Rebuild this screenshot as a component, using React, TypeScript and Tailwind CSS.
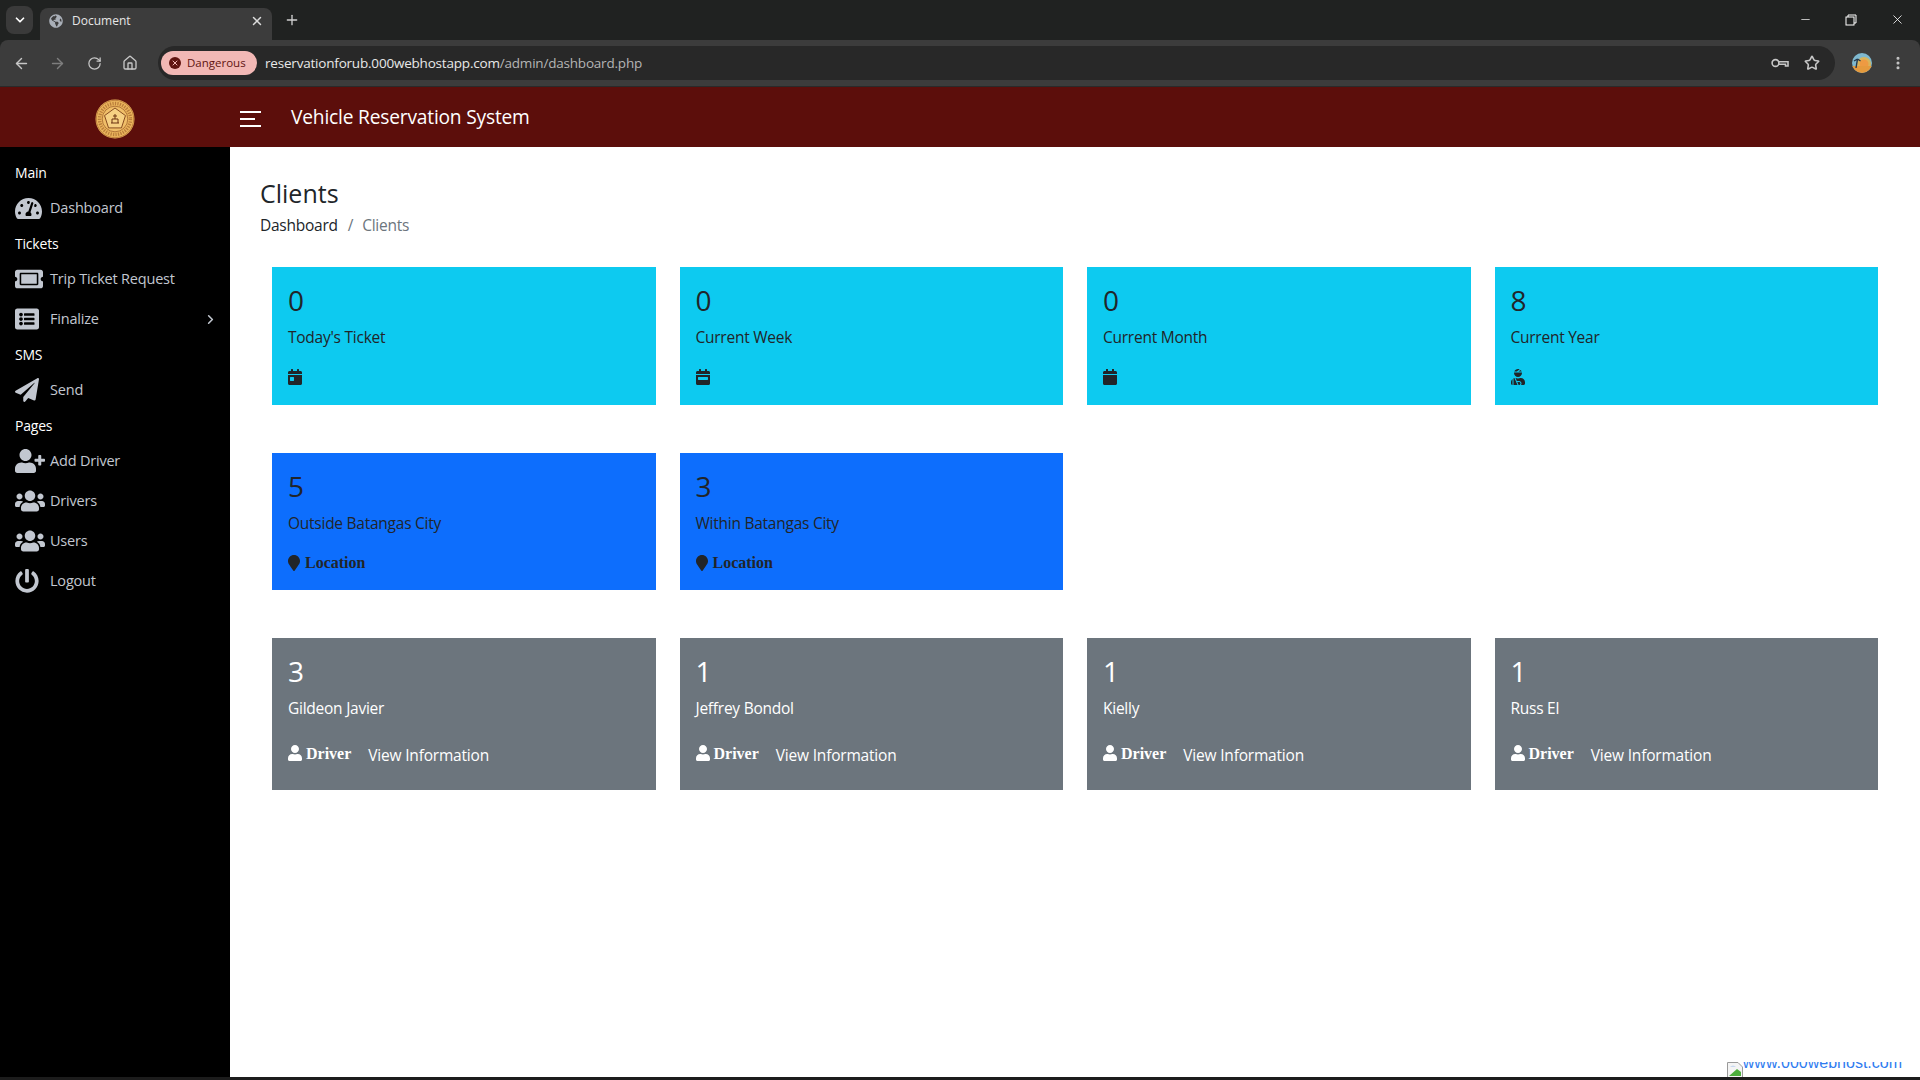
import React from 'react';
import { ArrowLeft, ArrowRight, ChevronDown, ChevronRight, EllipsisVertical, Home, Minus, Plus, RotateCw, Star, X } from 'lucide-react';
import {
  FaCalendar,
  FaCalendarDay,
  FaCalendarWeek,
  FaGlobeAmericas,
  FaListAlt,
  FaMapMarker,
  FaPaperPlane,
  FaPowerOff,
  FaTachometerAlt,
  FaTicketAlt,
  FaUser,
  FaUserInjured,
  FaUserPlus,
  FaUsers,
} from 'react-icons/fa';

const UI_FONT = { fontFamily: '"Open Sans", "Noto Sans", sans-serif' };

function Seal() {
  const points = [0, 72, 144, 216, 288].map((deg) => {
    const a = ((deg - 90) * Math.PI) / 180;
    return `${20 + 11 * Math.cos(a)},${20 + 11 * Math.sin(a)}`;
  });
  return (
    <svg width="40" height="40" viewBox="0 0 40 40">
      <circle cx="20" cy="20" r="19.5" fill="#eab45c" />
      <circle cx="20" cy="20" r="18.7" fill="none" stroke="#a2602a" strokeWidth="0.6" />
      <circle cx="20" cy="20" r="15.5" fill="none" stroke="#8f4f1f" strokeWidth="3.4" strokeDasharray="1.2 1.3" opacity="0.55" />
      <circle cx="20" cy="20" r="12.8" fill="#f0be68" stroke="#8a4a1e" strokeWidth="0.6" />
      <polygon points={points.join(' ')} fill="#f6d083" stroke="#7a3d16" strokeWidth="0.9" />
      <path d="M16 24h8M17 24v-4h6v4M20 20v-5M18 17h4" stroke="#6b3212" strokeWidth="1" fill="none" />
    </svg>
  );
}

function Avatar() {
  return (
    <svg width="20" height="20" viewBox="0 0 20 20">
      <defs>
        <clipPath id="avatar-clip">
          <circle cx="10" cy="10" r="10" />
        </clipPath>
      </defs>
      <g clipPath="url(#avatar-clip)">
        <rect width="20" height="20" fill="#7fb9cf" />
        <circle cx="12" cy="11" r="7" fill="#d9b45a" />
        <circle cx="12" cy="11" r="4.5" fill="#ee9a42" />
        <rect y="13" width="20" height="7" fill="#e59a3d" />
        <path d="M4 15 L5.5 6 M5.5 6 L2 8 M5.5 6 L8.5 8" stroke="#26384a" strokeWidth="1.4" fill="none" />
      </g>
    </svg>
  );
}

function BrowserChrome() {
  return (
    <div className="shrink-0 bg-[#202221] text-[#c7c7c7]">
      <div className="flex h-10 items-end pl-[6px]">
        <div className="mb-[6px] flex h-[28px] w-[27px] items-center justify-center rounded-lg bg-[#3a3a3a]">
          <ChevronDown size={14} strokeWidth={3} className="text-white" />
        </div>
        <div className="ml-[7px] flex h-[32px] w-[232px] items-center rounded-t-lg bg-[#3c3c3c] pb-[6px] pl-[9px] pr-[8px]">
          <FaGlobeAmericas size={14} className="text-[#a9afb8]" />
          <span className="ml-[9px] flex-1 text-[12px] text-[#e6e6e6]" style={UI_FONT}>Document</span>
          <X size={14} strokeWidth={2.5} className="text-[#dcdcdc]" />
        </div>
        <div className="mb-[12px] ml-[10px] flex w-5 items-center justify-center">
          <Plus size={16} strokeWidth={2} className="text-[#d0d0d0]" />
        </div>
        <div className="mb-[13px] ml-auto flex items-center gap-[33px] pr-[15px] text-white">
          <Minus size={13} strokeWidth={1.3} />
          <svg width="12" height="12" viewBox="0 0 12 12" fill="none" stroke="currentColor" strokeWidth="1">
            <rect x="1" y="3" width="8" height="8" />
            <path d="M3 3V1h8v8H9" />
          </svg>
          <X size={15} strokeWidth={1.3} />
        </div>
      </div>
      <div className="flex h-[47px] items-center rounded-t-lg border-b border-b-[#2a2a2a] bg-[#3c3c3c] pl-[13px]">
        <ArrowLeft size={17} className="text-[#c7c7c7]" />
        <ArrowRight size={17} className="ml-[19px] text-[#7e7e7e]" />
        <RotateCw size={15} className="ml-[21px] text-[#c7c7c7]" />
        <Home size={16} className="ml-[20px] text-[#c7c7c7]" />
        <div className="ml-[20px] flex h-[34px] w-[1677px] items-center rounded-full bg-[#282828] pl-[3px] pr-[15px]">
          <div className="flex h-[24px] w-[96px] items-center rounded-full bg-[#f2b8b5] pl-[8px]">
            <span className="flex h-[12px] w-[12px] items-center justify-center rounded-full bg-[#601410]">
              <X size={8} strokeWidth={3} className="text-[#f2b8b5]" />
            </span>
            <span className="ml-[6px] text-[11.5px] text-[#601410]" style={UI_FONT}>Dangerous</span>
          </div>
          <span className="ml-[8px] text-[13.5px] tracking-[-0.2px] text-[#e8e8e8]" style={UI_FONT}>
            reservationforub.000webhostapp.com<span className="text-[#b5b5b5]">/admin/dashboard.php</span>
          </span>
          <svg width="18" height="11" viewBox="0 0 18 11" fill="none" stroke="#c7c7c7" strokeWidth="1.6" className="ml-auto">
            <circle cx="4.5" cy="5" r="3.4" />
            <path d="M8 3.8H17V8H14.5V6.2H8" />
          </svg>
          <Star size={16} strokeWidth={2.4} className="ml-[15px] text-[#c7c7c7]" />
        </div>
        <div className="ml-[17px]"><Avatar /></div>
        <EllipsisVertical size={16} strokeWidth={2.6} className="ml-[18px] text-[#c7c7c7]" />
      </div>
    </div>
  );
}

function Header() {
  return (
    <header className="flex h-[60px] shrink-0 items-center bg-[#5c0e0b] text-white">
      <div className="flex w-[230px] shrink-0 justify-center pt-[3px]"><Seal /></div>
      <div className="ml-[10px] flex w-[21px] flex-col gap-[5px] pt-[3px]">
        <span className="h-[2px] w-[21px] bg-white" />
        <span className="h-[2px] w-[15px] bg-white" />
        <span className="h-[2px] w-[21px] bg-white" />
      </div>
      <span className="ml-[30px] text-[19.2px] tracking-[-0.2px]" style={UI_FONT}>Vehicle Reservation System</span>
    </header>
  );
}

const NAV = [
  { kind: 'head', label: 'Main', cls: 'mt-[14px] mb-[3px]' },
  { kind: 'item', label: 'Dashboard', icon: FaTachometerAlt, size: 27 },
  { kind: 'head', label: 'Tickets', cls: 'mt-[4px] mb-[3px]' },
  { kind: 'item', label: 'Trip Ticket Request', icon: FaTicketAlt, size: 28 },
  { kind: 'item', label: 'Finalize', icon: FaListAlt, size: 24, arrow: true },
  { kind: 'head', label: 'SMS', cls: 'mt-[4px] mb-[3px]' },
  { kind: 'item', label: 'Send', icon: FaPaperPlane, size: 24 },
  { kind: 'head', label: 'Pages', cls: 'mt-[4px] mb-[3px]' },
  { kind: 'item', label: 'Add Driver', icon: FaUserPlus, size: 30 },
  { kind: 'item', label: 'Drivers', icon: FaUsers, size: 30 },
  { kind: 'item', label: 'Users', icon: FaUsers, size: 30 },
  { kind: 'item', label: 'Logout', icon: FaPowerOff, size: 24 },
] as const;

function Sidebar() {
  return (
    <aside className="w-[230px] shrink-0 bg-black">
      {NAV.map((n) => {
        if (n.kind === 'head') {
          return (
            <div key={n.label} className={`h-6 pl-[15px] text-[14px] leading-6 tracking-[-0.2px] text-white ${n.cls}`}>{n.label}</div>
          );
        }
        const Icon = n.icon;
        return (
          <div key={n.label} className="relative flex h-10 items-center text-[#c2c7d0]">
            <div className="flex w-[50px] shrink-0 justify-start pl-[15px]">
              <Icon size={n.size} />
            </div>
            <span className="text-[14.5px] tracking-[-0.2px]">{n.label}</span>
            {'arrow' in n && <ChevronRight size={15} strokeWidth={2.5} className="absolute right-[12px]" />}
          </div>
        );
      })}
    </aside>
  );
}

function Card({ count, label, tone, children, height }: { count: string; label: string; tone: string; children: React.ReactNode; height: string }) {
  return (
    <div className={`p-4 ${tone} ${height}`}>
      <div className="text-[28px] font-medium leading-[34px]">{count}</div>
      <div className="mt-[8px] text-[15.5px] leading-6 tracking-[-0.25px]">{label}</div>
      {children}
    </div>
  );
}

const CYAN = 'bg-[#0dcaf0] text-[#212529]';
const BLUE = 'bg-[#0d6efd] text-[#212529]';
const GRAY = 'bg-[#6c757d] text-white';
const SERIF = { fontFamily: '"Liberation Serif", serif' };

const TOP = [
  { count: '0', label: "Today's Ticket", Icon: FaCalendarDay },
  { count: '0', label: 'Current Week', Icon: FaCalendarWeek },
  { count: '0', label: 'Current Month', Icon: FaCalendar },
  { count: '8', label: 'Current Year', Icon: FaUserInjured },
];

const DRIVERS = [
  { count: '3', label: 'Gildeon Javier' },
  { count: '1', label: 'Jeffrey Bondol' },
  { count: '1', label: 'Kielly' },
  { count: '1', label: 'Russ El' },
];

function Main() {
  return (
    <main className="flex-1 bg-white pl-[30px] pr-[42px] pt-[30px]">
      <h1 className="text-[25px] font-medium leading-[32px] text-[#212529]">Clients</h1>
      <div className="mt-[4px] text-[15.5px] leading-6 tracking-[-0.25px]">
        <span className="text-[#212529]">Dashboard</span>
        <span className="ml-[10px] mr-[9px] text-[#6c757d]">/</span>
        <span className="text-[#6c757d]">Clients</span>
      </div>
      <div className="ml-3 mt-[30px] flex flex-col gap-12">
        <div className="grid grid-cols-4 gap-x-6">
          {TOP.map((c) => (
            <Card key={c.label} count={c.count} label={c.label} tone={CYAN} height="h-[138px]">
              <div className="-ml-[1px] mt-[20px] h-4"><c.Icon size={16} /></div>
            </Card>
          ))}
        </div>
        <div className="grid grid-cols-4 gap-x-6">
          {['Outside Batangas City|5', 'Within Batangas City|3'].map((v) => {
            const [label, count] = v.split('|');
            return (
              <Card key={label} count={count} label={label} tone={BLUE} height="h-[137px]">
                <div className="mt-[20px] flex h-4 items-center">
                  <FaMapMarker size={16} className="-ml-[2px]" />
                  <span className="ml-[3px] text-[16px] font-bold" style={SERIF}>Location</span>
                </div>
              </Card>
            );
          })}
        </div>
        <div className="grid grid-cols-4 gap-x-6">
          {DRIVERS.map((d) => (
            <Card key={d.label} count={d.count} label={d.label} tone={GRAY} height="h-[152px]">
              <div className="mt-[26px] flex h-4 items-center">
                <FaUser size={16} className="-ml-[1px] -mt-[2px]" />
                <span className="ml-[3px] -mt-[1px] text-[16px] font-bold" style={SERIF}>Driver</span>
                <span className="ml-[17px] mt-[3px] text-[15.5px] tracking-[-0.2px]">View Information</span>
              </div>
            </Card>
          ))}
        </div>
      </div>
    </main>
  );
}

function BrokenBanner() {
  return (
    <div className="absolute bottom-[2px] right-[18px] flex items-end">
      <svg width="16" height="16" viewBox="0 0 16 16">
        <path d="M0.5 0.5H11L15.5 5V15.5H0.5Z" fill="#f4f4f4" stroke="#9a9a9a" />
        <path d="M2 14 L10 7 L14 10 V14 Z" fill="#4caf3c" />
        <path d="M3 5 Q6 2 9 5 Z" fill="#c7d8ef" />
      </svg>
      <div className="mb-[7px] h-[9px] overflow-hidden">
        <div className="-mt-[8px] text-[16px] leading-[18px] text-[#2f7cf0]" style={{ fontFamily: '"Liberation Sans", sans-serif' }}>www.000webhost.com</div>
      </div>
    </div>
  );
}

export default function App() {
  return (
    <div className="relative flex h-screen w-full flex-col overflow-hidden bg-white" style={UI_FONT}>
      <BrowserChrome />
      <Header />
      <div className="flex flex-1">
        <Sidebar />
        <Main />
      </div>
      <BrokenBanner />
      <div className="relative z-10 h-[3px] shrink-0 bg-[#1c1c1c]" />
    </div>
  );
}
